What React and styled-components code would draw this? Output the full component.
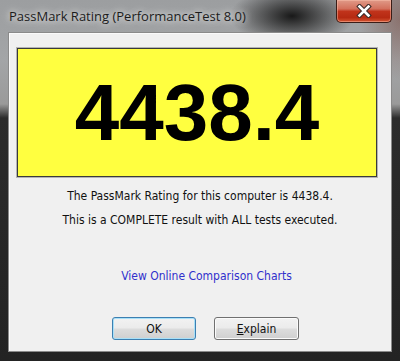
import React from 'react';
import styled, { createGlobalStyle } from 'styled-components';

const Global = createGlobalStyle`
  html, body { margin: 0; padding: 0; background: #262626; }
  body { width: 400px; height: 361px; overflow: hidden; }
`;

const Window = styled.div`
  width: 400px;
  height: 361px;
  box-sizing: border-box;
  display: flex;
  flex-direction: column;
  padding: 0 8px 9px 8px;
  background:
    radial-gradient(ellipse 62px 30px at 292px 16px, rgba(20, 20, 20, 0.97), rgba(20, 20, 20, 0) 100%),
    radial-gradient(ellipse 40px 60px at 400px 20px, rgba(120, 70, 60, 0.5), rgba(120, 70, 60, 0) 100%),
    linear-gradient(to bottom, #9c9ea0 0, #a3a5a7 60px, #9a9a9a 104px, #2c2c2c 118px, #232323 100%);
`;

const TitleBar = styled.div`
  height: 32px;
  flex: none;
  display: flex;
  align-items: flex-start;
  justify-content: space-between;
  padding-left: 1px;
`;

const Title = styled.div`
  padding-top: 10px;
  font-family: "Open Sans", "Noto Sans", sans-serif;
  font-size: 13px;
  line-height: 13px;
  color: #1c1c1c;
  text-shadow: 0 0 6px rgba(255, 255, 255, 0.85), 0 0 12px rgba(255, 255, 255, 0.6);
  white-space: nowrap;
`;

const CloseButton = styled.div`
  width: 56px;
  height: 23px;
  box-sizing: border-box;
  border: 1px solid #3b1d17;
  border-top: none;
  border-radius: 0 0 5px 5px;
  background: linear-gradient(to bottom, #e09a88 0%, #d3705c 40%, #c0331b 52%, #b62a12 80%, #d45632 100%);
  box-shadow: inset 0 0 0 1px rgba(255, 200, 180, 0.45);
  display: flex;
  align-items: center;
  justify-content: center;
`;

const Client = styled.div`
  flex: 1;
  display: flex;
  flex-direction: column;
  background: #f0f0f0;
  border: 1px solid #8a8a8a;
  box-shadow: inset 1px 1px 0 #fafafa;
  padding-top: 15px;
`;

const ScoreBox = styled.div`
  height: 129px;
  margin: 0 14px 0 8px;
  box-sizing: border-box;
  background: #ffff40;
  border: 1px solid #3a3a3a;
  box-shadow: 0 0 0 1px #b4b4b4;
  display: flex;
  align-items: center;
  justify-content: center;
  font-family: "Liberation Sans", Arial, sans-serif;
  font-weight: bold;
  font-size: 80px;
  line-height: 1;
  color: #000;
`;

const Message = styled.div`
  text-align: center;
  font-family: "DejaVu Sans Condensed", "DejaVu Sans", sans-serif;
  font-size: 12px;
  line-height: 24px;
  color: #111;
  margin-top: ${(p) => p.$top || 0}px;
`;

const Link = styled.div`
  text-align: center;
  font-family: "DejaVu Sans Condensed", "DejaVu Sans", sans-serif;
  font-size: 12px;
  line-height: 24px;
  color: #3030cc;
  margin-top: 32px;
  padding-left: 13px;
`;

const ButtonRow = styled.div`
  display: flex;
  justify-content: center;
  gap: 18px;
  margin-top: 29px;
  padding-left: 11px;
`;

const Button = styled.div`
  width: ${(p) => p.$w}px;
  height: 23px;
  box-sizing: border-box;
  border-radius: 3px;
  border: 1px solid ${(p) => (p.$default ? '#3c7fb1' : '#707070')};
  background: linear-gradient(to bottom, #f2f2f2 0%, #ebebeb 48%, #dddddd 52%, #cfcfcf 100%);
  box-shadow: inset 0 0 0 1px ${(p) => (p.$default ? '#a8e0f8' : '#fbfbfb')};
  display: flex;
  align-items: center;
  justify-content: center;
  font-family: "DejaVu Sans Condensed", "DejaVu Sans", sans-serif;
  font-size: 12px;
  color: #111;
`;

const Mnemonic = styled.span`
  text-decoration: underline;
`;

export default function App() {
  return (
    <>
      <Global />
      <Window>
        <TitleBar>
          <Title>PassMark Rating (PerformanceTest 8.0)</Title>
          <CloseButton>
            <svg width="16" height="14" viewBox="0 0 16 14">
              <path d="M3.5 2.5 L12.5 11.5 M12.5 2.5 L3.5 11.5" stroke="#3a2a28" strokeWidth="4.6" strokeLinecap="square" />
              <path d="M3.5 2.5 L12.5 11.5 M12.5 2.5 L3.5 11.5" stroke="#ffffff" strokeWidth="2.6" strokeLinecap="square" />
            </svg>
          </CloseButton>
        </TitleBar>
        <Client>
          <ScoreBox>4438.4</ScoreBox>
          <Message $top={7}>The PassMark Rating for this computer is 4438.4.</Message>
          <Message>This is a COMPLETE result with ALL tests executed.</Message>
          <Link>View Online Comparison Charts</Link>
          <ButtonRow>
            <Button $w={84} $default>OK</Button>
            <Button $w={85}><Mnemonic>E</Mnemonic>xplain</Button>
          </ButtonRow>
        </Client>
      </Window>
    </>
  );
}
